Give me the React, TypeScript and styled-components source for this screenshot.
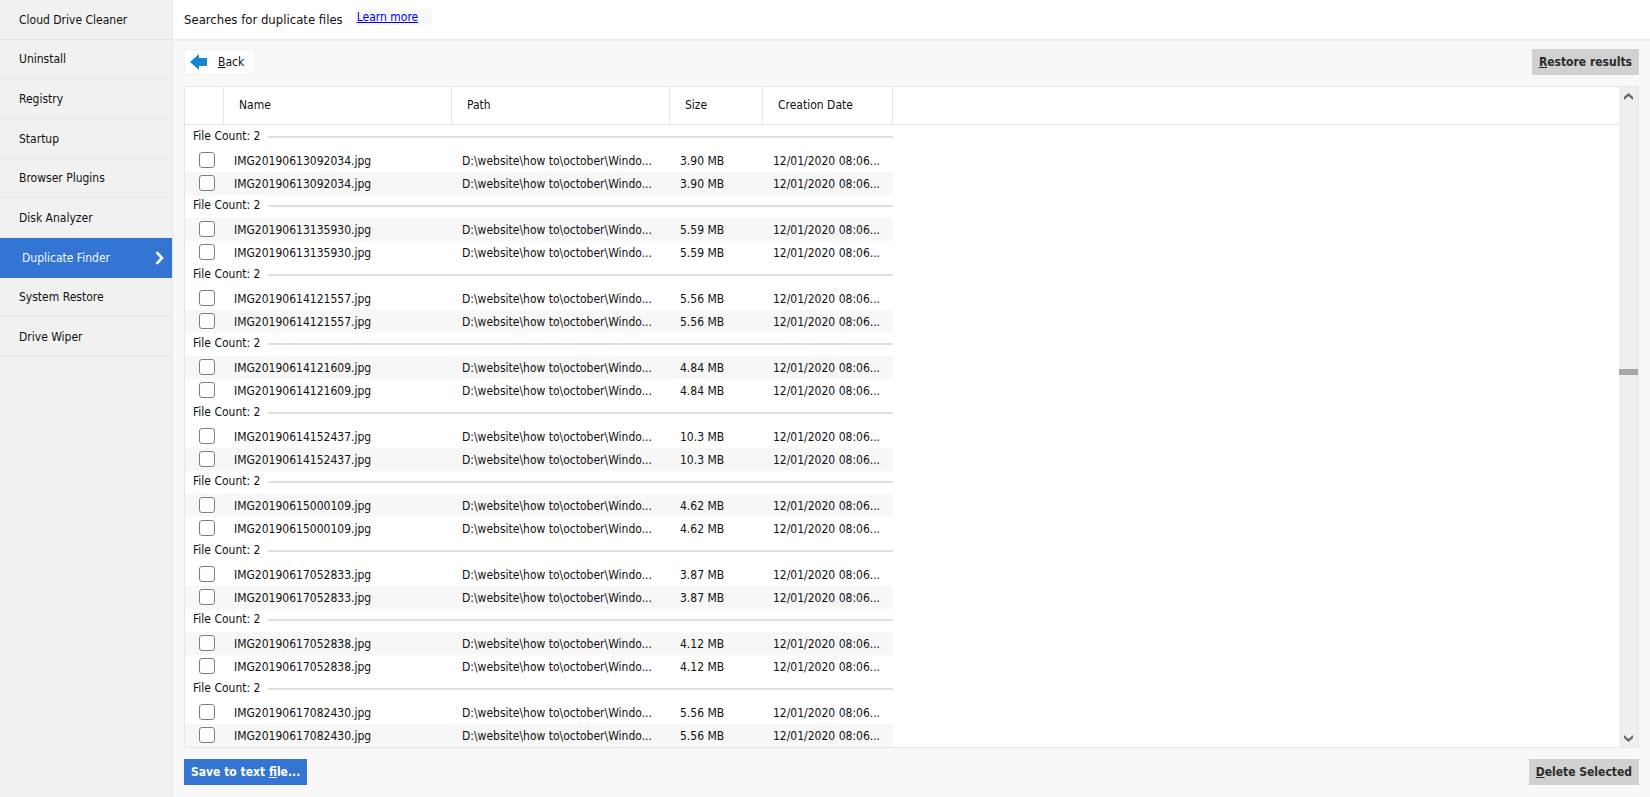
import React from 'react';
import styled, { createGlobalStyle } from 'styled-components';

const Global = createGlobalStyle`
  * { box-sizing: border-box; }
  body {
    margin: 0;
    background: #f8f8f8;
    color: #101010;
    font-family: "DejaVu Sans Condensed", Tahoma, "Noto Sans", sans-serif;
    font-size: 12px;
    line-height: 16px;
  }
  button { font: inherit; color: inherit; cursor: pointer; }
`;

const Page = styled.div`
  display: flex;
  height: 100vh;
`;

const Sidebar = styled.aside`
  flex: none;
  width: 173px;
  background: #f1f1f1;
  border-right: 1px solid #e6e6e6;
`;

const Nav = styled.nav`
  display: grid;
  grid-auto-rows: 1fr;
  height: 357px;
`;

const NavLink = styled.a<{ $active?: boolean }>`
  display: flex;
  align-items: center;
  justify-content: space-between;
  padding: ${p => (p.$active ? '2px 8px 0 22px' : '1px 8px 0 19px')};
  border-bottom: 1px solid ${p => (p.$active ? '#3474d2' : '#e6e6e6')};
  background: ${p => (p.$active ? '#3474d2' : 'transparent')};
  color: ${p => (p.$active ? '#f4f8ff' : 'inherit')};
  text-decoration: none;
`;

const Main = styled.main`
  flex: 1;
  min-width: 0;
  display: flex;
  flex-direction: column;
`;

const TitleBar = styled.header`
  display: flex;
  align-items: center;
  gap: 12px;
  height: 41px;
  padding-left: 11px;
  background: #fff;
  border-bottom: 2px solid #ebebeb;
`;

const Title = styled.h1`
  margin: 0;
  font-size: 13px;
  line-height: 20px;
  font-weight: 400;
`;

const LearnMore = styled.a`
  align-self: flex-start;
  margin-top: 9px;
  padding: 0 14px 0 2px;
  background: #f8f8f8;
  color: #0000f0;
`;

const Toolbar = styled.div`
  display: flex;
  align-items: center;
  justify-content: space-between;
  padding: 8px 11px 11px;
`;

const BackButton = styled.button`
  display: flex;
  align-items: center;
  gap: 11px;
  height: 26px;
  padding: 0 10px 0 5px;
  border: 1px solid #f2f2f2;
  background: #fff;
`;

const ActionButton = styled.button<{ $primary?: boolean }>`
  height: 26px;
  padding: 0 7px;
  border: 0;
  background: ${p => (p.$primary ? '#3474d2' : '#d1d1d1')};
  color: ${p => (p.$primary ? '#fff' : '#2b2b2b')};
  font-weight: 700;
`;

const Panel = styled.section`
  flex: 1;
  min-height: 0;
  display: flex;
  margin: 0 11px;
  border: 1px solid #e6e6e6;
  background: #fff;
`;

const List = styled.div`
  flex: 1;
  min-width: 0;
  overflow: hidden;
  background: linear-gradient(#e6e6e6, #e6e6e6) 0 37px / 100% 1px no-repeat;
`;

const Table = styled.table`
  width: 708px;
  table-layout: fixed;
  border-collapse: separate;
  border-spacing: 0;
`;

const HeadCell = styled.th`
  height: 39px;
  padding: 0 15px 2px;
  border-right: 1px solid #e6e6e6;
  border-bottom: 1px solid #fff;
  text-align: left;
  font-weight: 400;
`;

const GroupCell = styled.th`
  height: 23px;
  padding: 0 0 0 8px;
  font-weight: 400;
`;

const GroupLabel = styled.div`
  display: flex;
  align-items: center;
  gap: 8px;
  padding-bottom: 3px;

  &::after {
    content: '';
    flex: 1;
    height: 2px;
    margin-top: 2px;
    background: #e0e0e0;
  }
`;

const FileRow = styled.tr<{ $shaded: boolean }>`
  background: ${p => (p.$shaded ? '#f7f7f7' : '#fff')};
`;

const Cell = styled.td`
  height: 23px;
  padding: 0 10px;
  white-space: nowrap;
`;

const CheckCell = styled(Cell)`
  padding: 0 0 2px 14px;
`;

const Check = styled.input`
  appearance: none;
  display: block;
  width: 16px;
  height: 16px;
  margin: 0;
  border: 1px solid #7d8187;
  border-radius: 3px;
  background: #fff;

  &:checked { background: #3474d2; }
`;

const ScrollTrack = styled.div`
  flex: none;
  display: flex;
  flex-direction: column;
  width: 19px;
  background: #efefef;
`;

const ScrollButton = styled.button`
  display: grid;
  place-items: center;
  height: 18px;
  padding: 0;
  border: 0;
  background: transparent;
`;

const Thumb = styled.div`
  height: 6px;
  background: #a8a8a8;
`;

const Spacer = styled.div<{ $grow: number }>`
  flex: ${p => p.$grow} 1 0;
`;

const Footer = styled.footer`
  display: flex;
  justify-content: space-between;
  padding: 11px 11px 12px;
`;

const navItems = [
  'Cloud Drive Cleaner', 'Uninstall', 'Registry', 'Startup', 'Browser Plugins',
  'Disk Analyzer', 'Duplicate Finder', 'System Restore', 'Drive Wiper',
];

const groups = [
  { name: 'IMG20190613092034.jpg', size: '3.90 MB' },
  { name: 'IMG20190613135930.jpg', size: '5.59 MB' },
  { name: 'IMG20190614121557.jpg', size: '5.56 MB' },
  { name: 'IMG20190614121609.jpg', size: '4.84 MB' },
  { name: 'IMG20190614152437.jpg', size: '10.3 MB' },
  { name: 'IMG20190615000109.jpg', size: '4.62 MB' },
  { name: 'IMG20190617052833.jpg', size: '3.87 MB' },
  { name: 'IMG20190617052838.jpg', size: '4.12 MB' },
  { name: 'IMG20190617082430.jpg', size: '5.56 MB' },
];

const ScrollArrow = ({ down }: { down?: boolean }) => (
  <svg width="9" height="7" viewBox="0 0 9 7" aria-hidden="true">
    <path d={down ? 'M0 0L4.500 4L9 0V3L4.500 7L0 3Z' : 'M0 7L4.500 3L9 7V4L4.500 0L0 4Z'} fill="#666" />
  </svg>
);

export default function App() {
  return (
    <Page>
      <Global />
      <Sidebar>
        <Nav aria-label="Tools">
          {navItems.map(item => {
            const active = item === 'Duplicate Finder';
            return (
              <NavLink key={item} href="#" $active={active} aria-current={active ? 'page' : undefined}>
                {item}
                {active && (
                  <svg width="9" height="14" viewBox="0 0 9 14" aria-hidden="true">
                    <path d="M1.500 1.200L7 7L1.500 12.800" fill="none" stroke="#fff" strokeWidth="2.600" />
                  </svg>
                )}
              </NavLink>
            );
          })}
        </Nav>
      </Sidebar>
      <Main>
        <TitleBar>
          <Title>Searches for duplicate files</Title>
          <LearnMore href="#">Learn more</LearnMore>
        </TitleBar>
        <Toolbar>
          <BackButton type="button">
            <svg width="17" height="16" viewBox="0 0 17 16" aria-hidden="true">
              <path d="M0 8L9 0V4H17V12H9V16Z" fill="#1786d1" />
            </svg>
            <span><u>B</u>ack</span>
          </BackButton>
          <ActionButton type="button"><u>R</u>estore results</ActionButton>
        </Toolbar>
        <Panel>
          <List>
            <Table>
              <colgroup>
                <col width={39} />
                <col width={228} />
                <col width={218} />
                <col width={93} />
                <col width={130} />
              </colgroup>
              <thead>
                <tr>
                  <HeadCell aria-label="Selected" />
                  <HeadCell>Name</HeadCell>
                  <HeadCell>Path</HeadCell>
                  <HeadCell>Size</HeadCell>
                  <HeadCell>Creation Date</HeadCell>
                </tr>
              </thead>
              {groups.map((g, i) => (
                <tbody key={g.name}>
                  <tr>
                    <GroupCell colSpan={5} scope="rowgroup">
                      <GroupLabel>File Count: 2</GroupLabel>
                    </GroupCell>
                  </tr>
                  {[0, 1].map(n => (
                    <FileRow key={n} $shaded={(i + n) % 2 === 1}>
                      <CheckCell><Check type="checkbox" aria-label={`${g.name} copy ${n + 1}`} /></CheckCell>
                      <Cell>{g.name}</Cell>
                      <Cell>D:\website\how to\october\Windo...</Cell>
                      <Cell>{g.size}</Cell>
                      <Cell>12/01/2020 08:06...</Cell>
                    </FileRow>
                  ))}
                </tbody>
              ))}
            </Table>
          </List>
          <ScrollTrack>
            <ScrollButton type="button" aria-label="Scroll up"><ScrollArrow /></ScrollButton>
            <Spacer $grow={263} />
            <Thumb />
            <Spacer $grow={353} />
            <ScrollButton type="button" aria-label="Scroll down"><ScrollArrow down /></ScrollButton>
          </ScrollTrack>
        </Panel>
        <Footer>
          <ActionButton type="button" $primary>Save to text <u>f</u>ile...</ActionButton>
          <ActionButton type="button"><u>D</u>elete Selected</ActionButton>
        </Footer>
      </Main>
    </Page>
  );
}
